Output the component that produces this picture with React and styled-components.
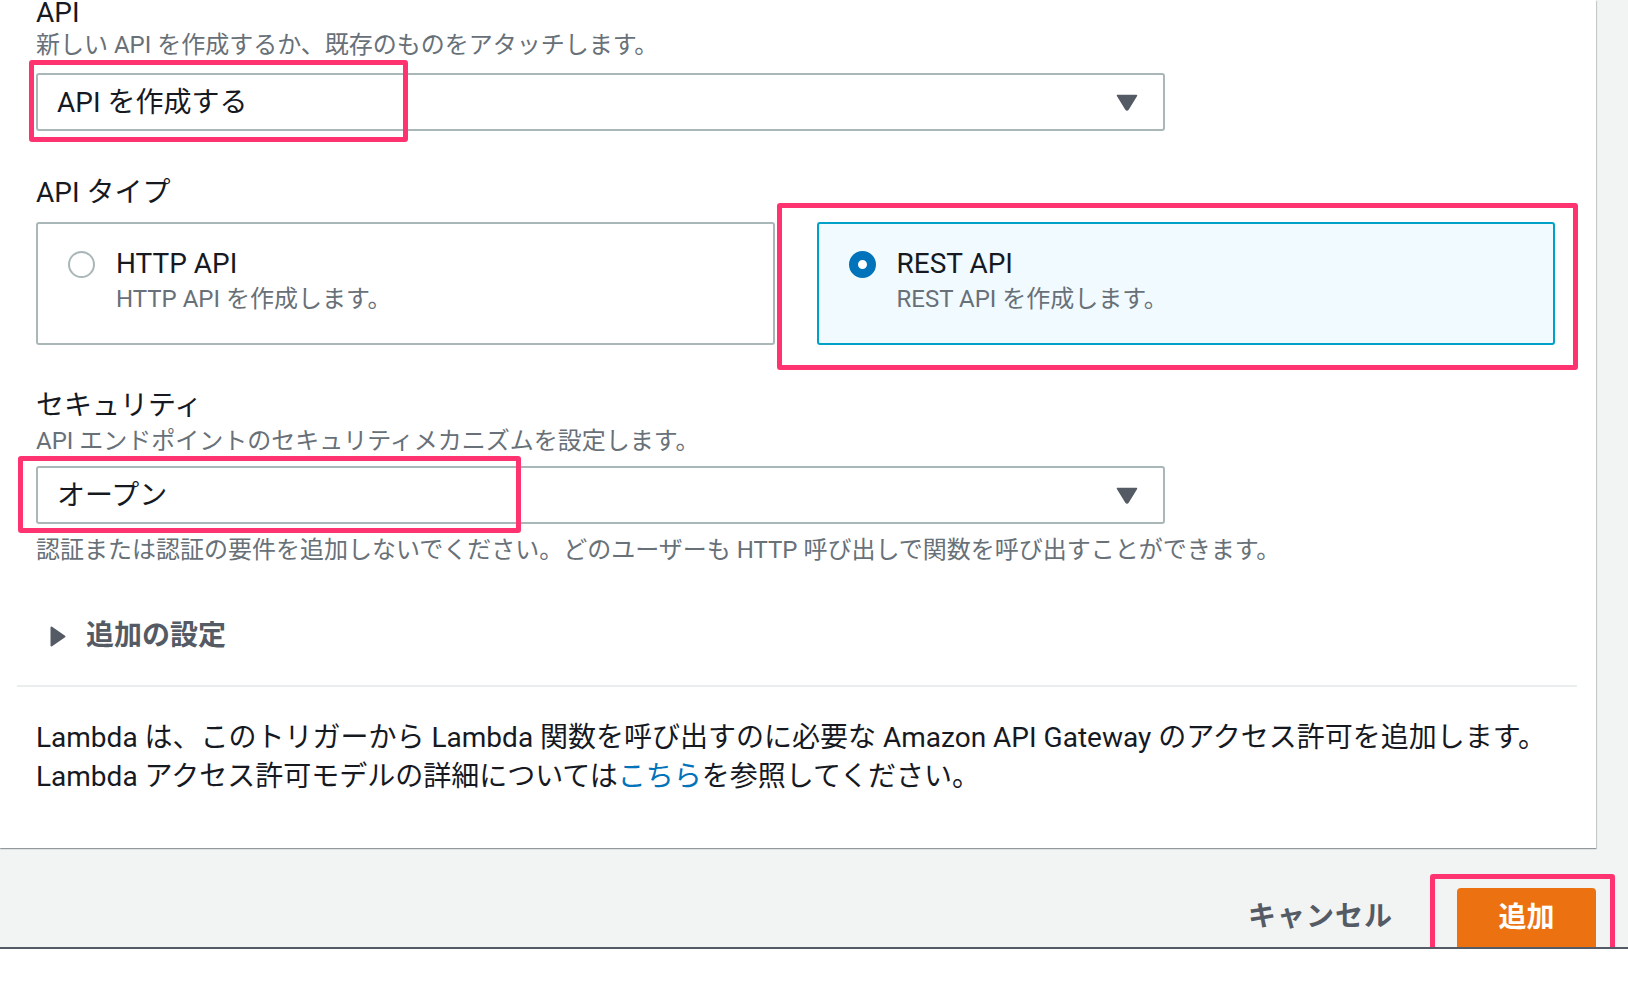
import React from "react";
import styled, { createGlobalStyle } from "styled-components";

const Global = createGlobalStyle`
  html, body { margin: 0; padding: 0; background: #ffffff; }
  body { font-family: Roboto, "Noto Sans CJK JP", "Noto Sans", sans-serif; color: #16191f; }
  * { box-sizing: border-box; }
`;

const Page = styled.div`
  width: 1628px;
  height: 992px;
  overflow: hidden;
  background: #ffffff;
  display: flex;
  flex-direction: column;
`;

const Top = styled.div`
  background: #f2f3f3;
  display: flex;
`;

const Panel = styled.div`
  width: 1596px;
  background: #ffffff;
  padding: 0 19px 52px 17px;
  box-shadow: 0 1px 1px 0 rgba(0, 28, 36, 0.3), 1px 1px 1px 0 rgba(0, 28, 36, 0.15);
  position: relative;
  z-index: 1;
`;

const Section = styled.div`
  padding-left: 19px;
  display: flex;
  flex-direction: column;
`;

const Label = styled.div`
  font-size: 28px;
  line-height: 36px;
  color: #16191f;
  margin-top: ${(p) => p.$mt || 0}px;
`;

const Desc = styled.div`
  font-size: 24px;
  line-height: 32px;
  color: #687078;
  margin-top: ${(p) => p.$mt || 0}px;
`;

const SelectBox = styled.div`
  position: relative;
  width: 1129px;
  height: 58px;
  margin-top: ${(p) => p.$mt || 10}px;
  border: 2px solid #aab7b8;
  border-radius: 3px;
  background: #fff;
  display: flex;
  align-items: center;
  justify-content: space-between;
  padding: 0 25px 4px 19px;
  font-size: 28px;
  color: #16191f;
`;

const CaretWrap = styled.span`
  display: flex;
  margin-top: 4px;
`;

const Highlight = styled.div`
  position: absolute;
  left: ${(p) => p.$l}px;
  top: ${(p) => p.$t}px;
  width: ${(p) => p.$w}px;
  height: ${(p) => p.$h}px;
  border: 5px solid #ff3370;
  border-radius: 3px;
  pointer-events: none;
  z-index: 5;
`;

const Tiles = styled.div`
  width: 1519px;
  margin-top: 11px;
  display: grid;
  grid-template-columns: 1fr 1fr;
  gap: 42px;
`;

const Tile = styled.div`
  position: relative;
  height: 123px;
  border: 2px solid ${(p) => (p.$selected ? "#00a1c9" : "#aab7b8")};
  background: ${(p) => (p.$selected ? "#f1faff" : "#ffffff")};
  border-radius: 3px;
  padding: 21px 20px 0 30px;
  display: flex;
  align-items: flex-start;
  gap: 21px;
`;

const Radio = styled.span`
  flex: none;
  width: 27px;
  height: 27px;
  margin-top: 6px;
  border-radius: 50%;
  background: #fff;
  border: ${(p) => (p.$checked ? "9.5px solid #0073bb" : "2.5px solid #aab7b8")};
`;

const TileText = styled.div`
  display: flex;
  flex-direction: column;
`;

const TileTitle = styled.div`
  font-size: 28px;
  line-height: 38px;
  color: #16191f;
`;

const Hint = styled.div`
  font-size: 24px;
  line-height: 32px;
  color: #687078;
  margin-top: 10px;
`;

const Expander = styled.div`
  margin-top: 52px;
  display: flex;
  align-items: center;
  gap: 20px;
  padding-left: 14px;
  font-size: 28px;
  line-height: 36px;
  font-weight: 700;
  color: #545b64;
`;

const Divider = styled.div`
  height: 2px;
  background: #eaeded;
  margin-top: 31px;
`;

const Note = styled.p`
  margin: 31px 0 0;
  padding-left: 19px;
  font-size: 28px;
  line-height: 39px;
  color: #16191f;
`;

const Link = styled.a`
  color: #0073bb;
  text-decoration: none;
`;

const Footer = styled.div`
  height: 101px;
  background: #f2f3f3;
  border-bottom: 2px solid #545b64;
  display: flex;
  justify-content: flex-end;
  align-items: flex-start;
  padding-right: 32px;
  overflow: hidden;
`;

const CancelButton = styled.div`
  margin-top: 51px;
  margin-right: 64px;
  font-size: 28px;
  line-height: 36px;
  font-weight: 700;
  color: #545b64;
  letter-spacing: 1px;
`;

const PrimaryButton = styled.div`
  position: relative;
  margin-top: 40px;
  width: 139px;
  height: 70px;
  border-radius: 4px;
  background: #ec7211;
  color: #ffffff;
  font-size: 28px;
  font-weight: 700;
  display: flex;
  justify-content: center;
  padding-top: 10px;
  line-height: 40px;
`;

const Caret = () => (
  <CaretWrap>
    <svg width="22" height="17" viewBox="0 0 22 17">
      <path d="M1.5 1.5 H20.5 L12.2 15.2 Q11 17 9.8 15.2 Z" fill="#545b64" stroke="#545b64" strokeWidth="1.5" strokeLinejoin="round" />
    </svg>
  </CaretWrap>
);

const RightTriangle = () => (
  <svg width="16" height="21" viewBox="0 0 16 21">
    <path d="M1.5 1.5 L14.5 10.5 L1.5 19.5 Z" fill="#545b64" stroke="#545b64" strokeWidth="2" strokeLinejoin="round" />
  </svg>
);

export default function App() {
  return (
    <>
      <Global />
      <Page>
        <Top>
          <Panel>
            <Section>
              <Label $mt={-5}>API</Label>
              <Desc $mt={-2}>新しい API を作成するか、既存のものをアタッチします。</Desc>
              <SelectBox $mt={12}>
                <span>API を作成する</span>
                <Caret />
                <Highlight $l={-9} $t={-15} $w={379} $h={82} />
              </SelectBox>

              <Label $mt={44}>API タイプ</Label>
              <Tiles>
                <Tile>
                  <Radio />
                  <TileText>
                    <TileTitle>HTTP API</TileTitle>
                    <Desc>HTTP API を作成します。</Desc>
                  </TileText>
                </Tile>
                <Tile $selected>
                  <Radio $checked />
                  <TileText>
                    <TileTitle>REST API</TileTitle>
                    <Desc>REST API を作成します。</Desc>
                  </TileText>
                  <Highlight $l={-42} $t={-21} $w={801} $h={167} />
                </Tile>
              </Tiles>

              <Label $mt={43}>セキュリティ</Label>
              <Desc $mt={1}>API エンドポイントのセキュリティメカニズムを設定します。</Desc>
              <SelectBox $mt={9}>
                <span>オープン</span>
                <Caret />
                <Highlight $l={-20} $t={-12} $w={503} $h={77} />
              </SelectBox>
              <Hint>認証または認証の要件を追加しないでください。どのユーザーも HTTP 呼び出しで関数を呼び出すことができます。</Hint>

              <Expander>
                <RightTriangle />
                <span>追加の設定</span>
              </Expander>
            </Section>
            <Divider />
            <Note>
              Lambda は、このトリガーから Lambda 関数を呼び出すのに必要な Amazon API Gateway のアクセス許可を追加します。
              <br />
              Lambda アクセス許可モデルの詳細については<Link href="#">こちら</Link>を参照してください。
            </Note>
          </Panel>
        </Top>
        <Footer>
          <CancelButton>キャンセル</CancelButton>
          <PrimaryButton>
            追加
            <Highlight $l={-27} $t={-14} $w={185} $h={80} />
          </PrimaryButton>
        </Footer>
      </Page>
    </>
  );
}
